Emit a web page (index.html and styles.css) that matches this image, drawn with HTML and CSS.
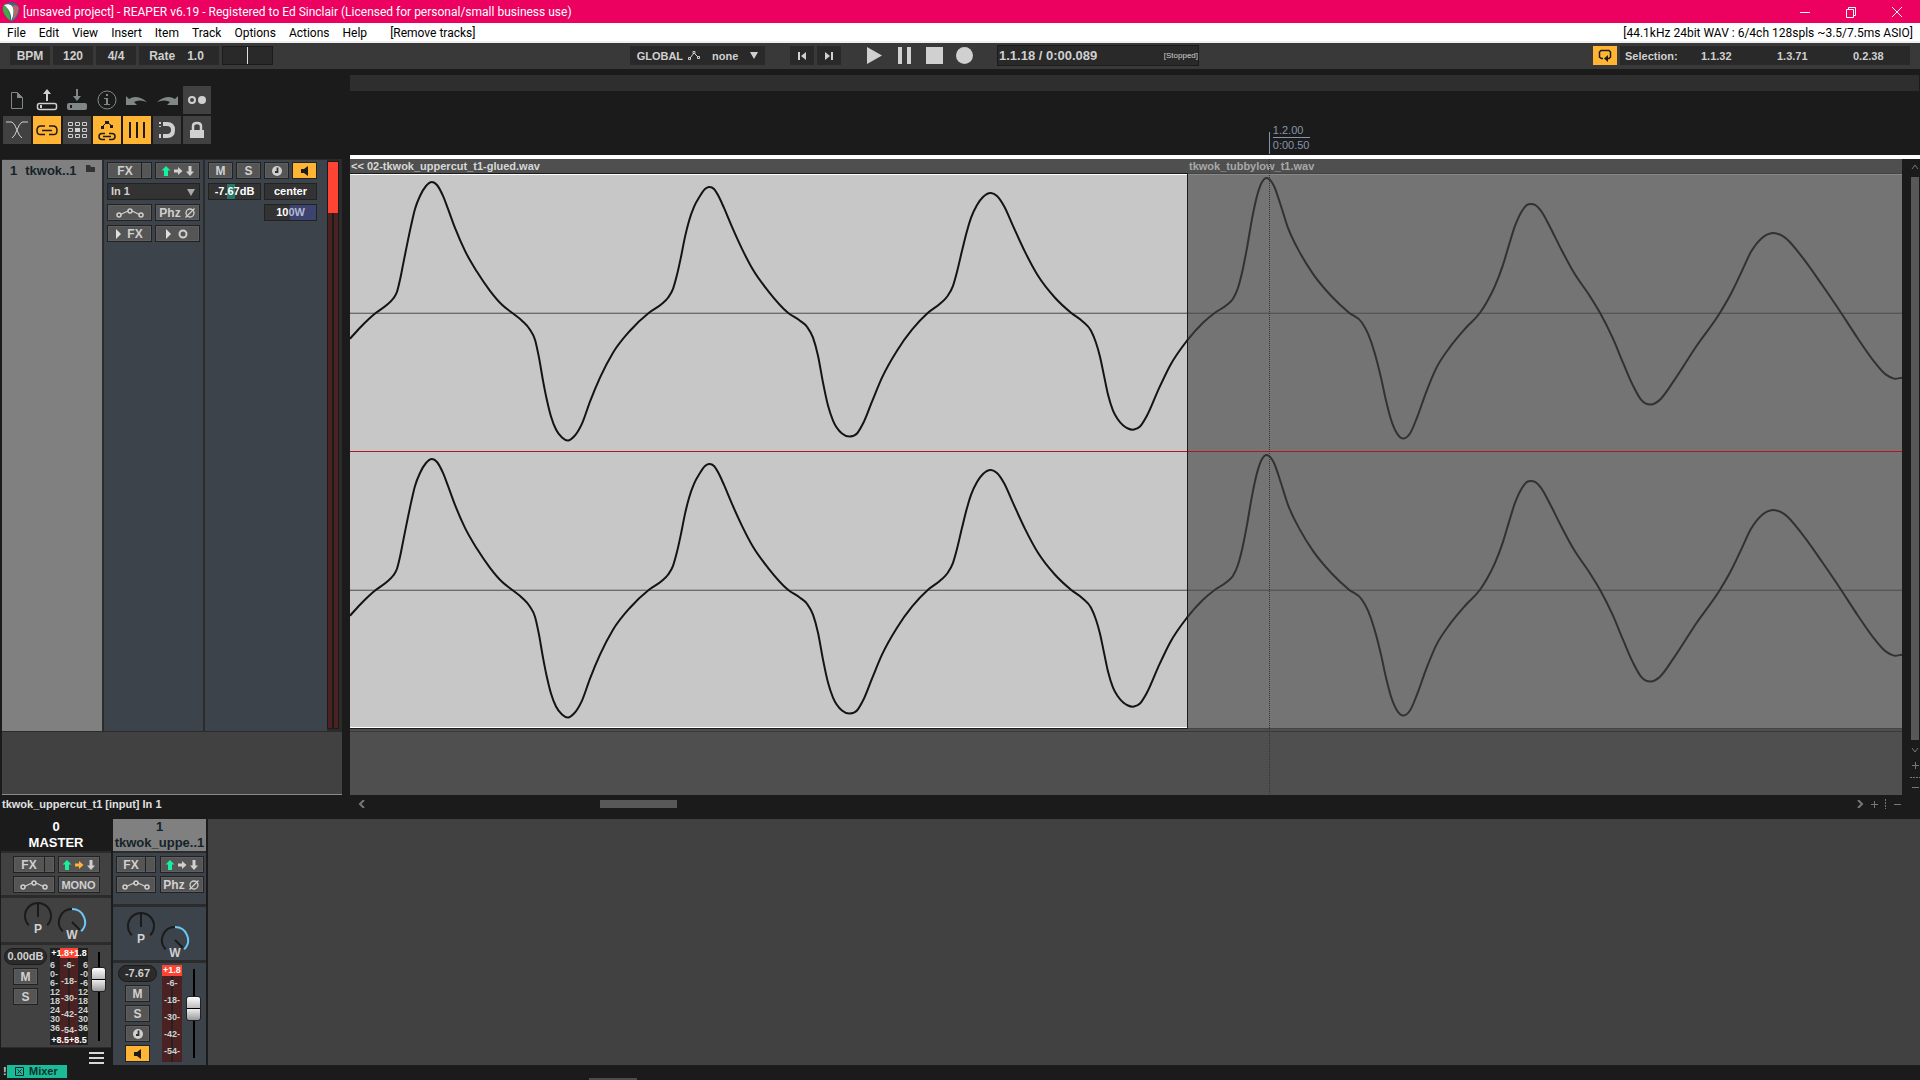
FILE: index.html
```html
<!DOCTYPE html>
<html lang="en">
<head>
    <meta charset="UTF-8">
    <meta name="viewport" content="width=device-width, initial-scale=1.0">
    <title>[unsaved project] - REAPER v6.19</title>
    <link rel="stylesheet" href="styles.css">
</head>
<body>
    <!-- shared shapes -->
    <svg class="defs" width="0" height="0">
        <defs>
            <path id="wave" vector-effect="non-scaling-stroke"/>
            <symbol id="route" viewBox="0 0 34 12">
                <path class="up" d="M5 1 9.500 5.500H7V11H3V5.500H0.500z"/>
                <path class="send" d="M13 4.500h4V2l4.500 4L17 10V7.500h-4z"/>
                <path d="M27.500 1h3v5.500H33L29 11 25 6.500h2.500z"/>
            </symbol>
            <symbol id="env" viewBox="0 0 28 10">
                <path d="M4.500 6.500 12 3M16 3l7.500 3.500" fill="none" stroke="currentColor" stroke-width="1.300"/>
                <g fill="none" stroke="currentColor" stroke-width="1.500"><circle cx="3" cy="7" r="2"/><circle cx="14" cy="3" r="2"/><circle cx="25" cy="7" r="2"/></g>
            </symbol>
            <symbol id="phase" viewBox="0 0 12 12">
                <g fill="none" stroke="currentColor" stroke-width="1.300"><circle cx="6" cy="6" r="4"/><path d="M1.500 10.500 10.500 1.500"/></g>
            </symbol>
            <symbol id="clock" viewBox="0 0 12 12">
                <circle cx="6" cy="6" r="5"/><path d="M6.500 2.500V7H4" fill="none" stroke="#333" stroke-width="1.800"/>
            </symbol>
            <symbol id="speaker" viewBox="0 0 12 12">
                <path d="M2 4h3l4-3v10L5 8H2z" fill="#1b1b1b"/>
            </symbol>
        </defs>
    </svg>

    <header class="titlebar">
        <svg class="logo" width="18" height="20" viewBox="0 0 18 20">
            <path d="M8 0.500C3 1 1 3 0.500 6c0 6 4 11 9.500 13.500C15 16 17.500 12 17 6 16 2 13 0 8 0.500z" fill="#2b6d86"/>
            <path d="M2 3C-0.500 6 1 13 8 18.500 8.500 12 6 6 2 3z" fill="#4aa843"/>
            <path d="M2 3c5-2 9 0 9.500 5 0.300 4-1 8-2.500 11 1-7-2-12-7-16z" fill="#fff"/>
            <path d="M10 3.500c4-1 7 0.500 6.500 4C16 12 14 15 10.500 18c1.500-5 2.500-10-0.500-14.500z" fill="#b56a62"/>
        </svg>
        <h1>[unsaved project] - REAPER v6.19 - Registered to Ed Sinclair (Licensed for personal/small business use)</h1>
        <div class="win-buttons">
            <button aria-label="Minimize"><svg width="12" height="12"><path d="M1 6.500h10"/></svg></button>
            <button aria-label="Restore"><svg width="12" height="12"><path d="M1.500 3.500h7v8h-7zM3.500 3.500v-2h7v8h-2"/></svg></button>
            <button aria-label="Close"><svg width="12" height="12"><path d="M1 1l10 10M11 1 1 11"/></svg></button>
        </div>
    </header>

    <nav class="menubar">
        <button>File</button>
        <button>Edit</button>
        <button>View</button>
        <button>Insert</button>
        <button>Item</button>
        <button>Track</button>
        <button>Options</button>
        <button>Actions</button>
        <button>Help</button>
        <button class="last-action">[Remove tracks]</button>
        <span class="audio-info">[44.1kHz 24bit WAV : 6/4ch 128spls ~3.5/7.5ms ASIO]</span>
    </nav>

    <div class="transport">
        <div class="tempo">
            <button class="box">BPM</button>
            <button class="box">120</button>
            <button class="box">4/4</button>
            <label class="box rate" for="rate"><span>Rate</span><span>1.0</span></label>
            <input type="range" id="rate" class="rate-slider">
        </div>
        <button class="box global">
            GLOBAL
            <svg width="12" height="9"><path d="M2 7 6 2l4 4" fill="none" stroke="#d0d0d0"/><path d="M0.500 6.500h2v2h-2zM5 0.500h2v2H5zM9.500 5.500h2v2h-2z" fill="none" stroke="#d0d0d0"/></svg>
            <span>none</span>
            <svg width="8" height="7"><path d="M0 0h8L4 7z" fill="#d0d0d0"/></svg>
        </button>
        <div class="jump">
            <button class="box" aria-label="Go to start"><svg width="8" height="8"><path d="M0 0h2v8H0zM8 0v8L3 4z"/></svg></button>
            <button class="box" aria-label="Go to end"><svg width="8" height="8"><path d="M6 0h2v8H6zM0 0v8l5-4z"/></svg></button>
        </div>
        <div class="play">
            <button aria-label="Play"><svg width="17" height="17"><path d="M1 0v17l15-8.500z"/></svg></button>
            <button aria-label="Pause"><svg width="17" height="17"><path d="M2 0h4v17H2zM11 0h4v17h-4z"/></svg></button>
            <button aria-label="Stop"><svg width="17" height="17"><path d="M0 0h17v17H0z"/></svg></button>
            <button aria-label="Record"><svg width="17" height="17"><circle cx="8.500" cy="8.500" r="8.500"/></svg></button>
        </div>
        <div class="position"><span>1.1.18 / 0:00.089</span><small>[Stopped]</small></div>
        <button class="repeat" aria-label="Repeat"><svg width="14" height="13"><path d="M5 9.500H3.500L1.500 8V3L3 1.500h8L12.500 3v5L11 9.500h-1" fill="none" stroke="#1b1b1b" stroke-width="1.500"/><path d="M6 9.500 10 6v7z" fill="#1b1b1b"/></svg></button>
        <div class="box selection"><span>Selection:</span><span>1.1.32</span><span>1.3.71</span><span>0.2.38</span></div>
    </div>

    <main>
        <div class="left">
            <div class="toolbar">
                <button class="flat dim" aria-label="New project"><svg viewBox="0 0 28 28"><path d="M8.500 6.500h6l5 5v11h-11z" fill="none" stroke="currentColor"/><path d="M14 6v6h6z"/></svg></button>
                <button class="flat" aria-label="Open project"><svg viewBox="0 0 28 28"><rect x="4.500" y="17.500" width="19" height="6" rx="2" fill="none" stroke="currentColor" stroke-width="1.500"/><path d="M7 19h2v3H7zM13 15h2V8h3l-4-5-4 5h3z"/></svg></button>
                <button class="flat dim" aria-label="Save project"><svg viewBox="0 0 28 28"><path d="M6 17h16q2 0 2 2v3q0 2-2 2H6q-2 0-2-2v-3q0-2 2-2zM7 19v3h2v-3z" fill-rule="evenodd"/><path d="M13 3h2v7h3l-4 5-4-5h3z"/></svg></button>
                <button class="flat dim" aria-label="Project settings"><svg viewBox="0 0 28 28"><circle cx="14" cy="14" r="9" fill="none" stroke="currentColor"/><path d="M13 8h2v2h-2zM11 12h4v6h2v1h-6v-1h2v-5h-2z"/></svg></button>
                <button class="flat dim" aria-label="Undo"><svg viewBox="0 0 28 28"><path d="M3 10l3 3q8-5 18 3-8-3-13 0l3 3H3z"/></svg></button>
                <button class="flat dim" aria-label="Redo"><svg viewBox="0 0 28 28"><path d="M25 10l-3 3q-8-5-18 3 8-3 13 0l-3 3h11z"/></svg></button>
                <button aria-label="Metronome"><svg viewBox="0 0 28 28"><circle cx="9" cy="14" r="3" fill="none" stroke="currentColor" stroke-width="2"/><circle cx="19" cy="14" r="4"/></svg></button>
                <button aria-label="Crossfade"><svg viewBox="0 0 28 28"><path d="M3 6h6q3 2 5 8t5 8M25 6h-6q-3 2-5 8t-5 8" fill="none" stroke="currentColor"/></svg></button>
                <button class="on" aria-label="Grouping"><svg viewBox="0 0 28 28"><path d="M12 10H8q-4 0-4 4.500T8 18.500h4M16 10h4q4 0 4 4.500t-4 4M16 18.500h4M9 14.500h10" fill="none" stroke="currentColor" stroke-width="1.500"/></svg></button>
                <button aria-label="Ripple editing"><svg viewBox="0 0 28 28"><path d="M5.500 6.500h4v3h-4zM12.500 6.500h4v3h-4zM19.500 6.500h4v3h-4zM5.500 12.500h4v3h-4zM19.500 12.500h4v3h-4zM5.500 18.500h4v3h-4zM12.500 18.500h4v3h-4zM19.500 18.500h4v3h-4z" fill="none" stroke="currentColor"/><path d="M12 12h5v4h-5z"/></svg></button>
                <button class="on" aria-label="Move envelopes"><svg viewBox="0 0 28 28"><path d="M9 11l5-5 5 4" fill="none" stroke="currentColor"/><path d="M8 10h3v3H8zM12 5h4v3h-4zM17 9h3v3h-3z"/><path d="M12 17.500H9q-3 0-3 3t3 3h3M16 17.500h3q3 0 3 3t-3 3h-3M10 20.500h8" fill="none" stroke="currentColor" stroke-width="1.500"/></svg></button>
                <button class="on" aria-label="Grid"><svg viewBox="0 0 28 28"><path d="M6 6h2v16H6zM13 6h2v16h-2zM20 6h2v16h-2z"/></svg></button>
                <button aria-label="Snap"><svg viewBox="0 0 28 28"><path d="M10 8h4q6 0 6 6t-6 6h-4" fill="none" stroke="currentColor" stroke-width="4"/><path d="M6 6h2v2H6zM6 10h2v1H6zM6 18h2v4H6z"/></svg></button>
                <button aria-label="Lock"><svg viewBox="0 0 28 28"><path d="M7 14h14v8H7z"/><path d="M10 14v-4q0-3 4-3t4 3v4" fill="none" stroke="currentColor" stroke-width="2.500"/></svg></button>
            </div>

            <section class="track">
                <div class="track-name">
                    <span>1</span><span>tkwok..1</span>
                    <svg width="9" height="7"><path d="M0 0h4l1 2h4v5H0z" fill="#333"/></svg>
                </div>
                <div class="track-io">
                    <button class="btn split">FX</button>
                    <button class="btn" aria-label="Routing"><svg width="34" height="12"><use href="#route"/></svg></button>
                    <label class="input-pick"><select aria-label="Input"><option>In 1</option></select></label>
                    <button class="btn" aria-label="Envelopes"><svg width="28" height="10"><use href="#env"/></svg></button>
                    <button class="btn">Phz <svg width="12" height="12"><use href="#phase"/></svg></button>
                    <button class="btn arrow">FX</button>
                    <button class="btn arrow"><svg width="12" height="12"><circle cx="6" cy="6" r="3.500" fill="none" stroke="currentColor" stroke-width="2"/></svg></button>
                </div>
                <div class="track-mix">
                    <button class="btn">M</button>
                    <button class="btn">S</button>
                    <button class="btn" aria-label="Record arm"><svg width="12" height="12"><use href="#clock"/></svg></button>
                    <button class="btn on" aria-label="Monitor"><svg width="12" height="12"><use href="#speaker"/></svg></button>
                    <button class="value vol">-7.67dB</button>
                    <button class="value">center</button>
                    <button class="value width">10<span>0W</span></button>
                </div>
                <div class="track-meter"></div>
            </section>
            <div class="no-tracks"></div>
        </div>

        <div class="arrange">
            <div class="region-strip"></div>
            <div class="ruler">
                <div class="mark"><span>1.2.00</span><span>0:00.50</span></div>
            </div>
            <div class="lane">
                <div class="item selected">
                    <div class="item-name">&lt;&lt; 02-tkwok_uppercut_t1-glued.wav</div>
                    <div class="channels">
                        <svg viewBox="0 -138 837 276" preserveAspectRatio="none"><path class="zero" d="M0 0.500h837"/><use href="#wave"/></svg>
                        <svg viewBox="0 -138 837 276" preserveAspectRatio="none"><path class="zero" d="M0 0.500h837"/><use href="#wave"/></svg>
                    </div>
                </div>
                <div class="item">
                    <div class="item-name">tkwok_tubbylow_t1.wav</div>
                    <div class="channels">
                        <svg viewBox="838 -138 714 276" preserveAspectRatio="none"><path class="zero" d="M838 0.500h714"/><use href="#wave"/></svg>
                        <svg viewBox="838 -138 714 276" preserveAspectRatio="none"><path class="zero" d="M838 0.500h714"/><use href="#wave"/></svg>
                    </div>
                </div>
            </div>
            <div class="lane-rest"></div>
            <div class="gridline"></div>
            <div class="vscroll">
                <svg width="8" height="7"><path d="M1 6l3-4 3 4"/></svg>
                <div class="thumb"></div>
                <svg width="8" height="7"><path d="M1 1l3 4 3-4"/></svg>
                <svg width="8" height="8"><path d="M4.500 1v7M1 4.500h7"/></svg>
                <svg width="10" height="3"><path d="M0 1.500h10" stroke-dasharray="2 1"/></svg>
                <svg width="8" height="3"><path d="M1 1.500h7"/></svg>
            </div>
        </div>
    </main>

    <div class="statusbar">
        <span>tkwok_uppercut_t1 [input] In 1</span>
        <div class="hscroll">
            <svg width="8" height="8"><path d="M6 0 2 4l4 4" stroke-width="2"/></svg>
            <div class="thumb"></div>
            <svg width="8" height="8"><path d="M2 0l4 4-4 4" stroke-width="2"/></svg>
            <svg width="8" height="8"><path d="M4.500 1v7M1 4.500h7"/></svg>
            <svg width="3" height="10"><path d="M1.500 0v10" stroke-dasharray="2 1"/></svg>
            <svg width="8" height="8"><path d="M1 4.500h7"/></svg>
        </div>
    </div>

    <section class="mixer">
        <div class="strip master">
            <h2><span>0</span><span>MASTER</span></h2>
            <div class="strip-buttons">
                <button class="btn split">FX</button>
                <button class="btn" aria-label="Routing"><svg width="34" height="12"><use href="#route"/></svg></button>
                <button class="btn" aria-label="Envelopes"><svg width="28" height="10"><use href="#env"/></svg></button>
                <button class="btn mono">MONO</button>
            </div>
            <div class="knobs">
                <svg width="30" height="36"><path d="M5.800 24.200A13 13 0 1 1 24.200 24.200M15 3v13"/><text x="15" y="32">P</text></svg>
                <svg width="30" height="36"><path d="M5.800 24.200A13 13 0 0 1 15 2M15 15l8 8"/><path class="amount" d="M15 2A13 13 0 0 1 24.200 24.200"/><text x="15" y="32">W</text></svg>
            </div>
            <div class="levels">
                <div class="level-buttons">
                    <output>0.00dB</output>
                    <button class="btn">M</button>
                    <button class="btn">S</button>
                </div>
                <div class="meter wide">
                    <b>+1.8+1.8</b>
                    <div class="scale side"><span>6</span><span>0-</span><span>6-</span><span>12</span><span>18</span><span>24</span><span>30</span><span>36</span></div>
                    <div class="scale"><span>-6-</span><span>-18-</span><span>-30-</span><span>-42-</span><span>-54-</span></div>
                    <div class="scale side end"><span>6</span><span>-0</span><span>-6</span><span>12</span><span>18</span><span>24</span><span>30</span><span>36</span></div>
                    <b>+8.5+8.5</b>
                </div>
                <input type="range" class="fader" aria-label="Master volume" value="76">
            </div>
            <button class="menu" aria-label="Mixer menu"></button>
        </div>
        <div class="strip channel">
            <h2><span>1</span><span>tkwok_uppe..1</span></h2>
            <div class="strip-buttons">
                <button class="btn split">FX</button>
                <button class="btn" aria-label="Routing"><svg width="34" height="12"><use href="#route"/></svg></button>
                <button class="btn" aria-label="Envelopes"><svg width="28" height="10"><use href="#env"/></svg></button>
                <button class="btn">Phz <svg width="12" height="12"><use href="#phase"/></svg></button>
            </div>
            <div class="knobs">
                <svg width="30" height="36"><path d="M5.800 24.200A13 13 0 1 1 24.200 24.200M15 3v13"/><text x="15" y="32">P</text></svg>
                <svg width="30" height="36"><path d="M5.800 24.200A13 13 0 0 1 15 2M15 15l8 8"/><path class="amount" d="M15 2A13 13 0 0 1 24.200 24.200"/><text x="15" y="32">W</text></svg>
            </div>
            <div class="levels">
                <div class="level-buttons">
                    <output>-7.67</output>
                    <button class="btn">M</button>
                    <button class="btn">S</button>
                    <button class="btn" aria-label="Record arm"><svg width="12" height="12"><use href="#clock"/></svg></button>
                    <button class="btn on" aria-label="Monitor"><svg width="12" height="12"><use href="#speaker"/></svg></button>
                </div>
                <div class="meter">
                    <b>+1.8</b>
                    <div class="scale"><span>-6-</span><span>-18-</span><span>-30-</span><span>-42-</span><span>-54-</span></div>
                </div>
                <input type="range" class="fader" aria-label="Track volume" value="58">
            </div>
        </div>
    </section>

    <footer class="docker">
        <span>!</span>
        <button><svg width="9" height="9"><path d="M0.500 0.500h8v8h-8zM2.500 2.500l4 4M6.500 2.500l-4 4" fill="none" stroke="#123"/></svg>Mixer</button>
        <div class="dock-thumb"></div>
    </footer>

    <script>
        // sample peaks as x,y pairs, y counted down from the zero line
        const samples = [
            [0,26],[10,15],[18,7],[26,0],[37,-8],[43,-14],[47,-21],[50,-33],[53,-48],[57,-68],[61,-87],[65,-104],[70,-117],[76,-127],[82,-131],[87,-128],
            [93,-117],[98,-104],[105,-85],[115,-62],[127,-41],[140,-22],[152,-8],[162,0],[172,8],[180,17],[185,27],[189,45],[193,68],[197,88],[201,104],
            [206,117],[212,125],[218,128],[224,124],[232,111],[240,89],[250,65],[263,40],[280,18],[299,0],[312,-9],[318,-15],[323,-24],[327,-38],[331,-56],
            [335,-76],[339,-92],[344,-106],[350,-117],[355,-124],[359,-126],[364,-124],[369,-116],[374,-105],[382,-86],[392,-64],[403,-43],[418,-22],[438,0],
            [450,8],[457,14],[463,25],[468,43],[473,70],[478,93],[483,108],[492,121],[500,124],[507,121],[513,111],[522,89],[532,65],[547,38],[562,17],[578,0],
            [590,-9],[597,-16],[603,-27],[607,-41],[612,-62],[617,-82],[621,-95],[627,-108],[633,-116],[641,-120],[647,-117],[654,-107],[663,-87],[675,-61],
            [688,-37],[705,-15],[721,0],[733,9],[741,18],[746,30],[750,44],[754,63],[758,82],[763,98],[768,107],[778,116],[784,117],[790,114],[797,103],
            [808,78],[820,53],[837,28],[853,10],[865,0],[877,-8],[883,-14],[888,-25],[892,-40],[897,-65],[902,-94],[907,-117],[912,-131],[916,-135],[919,-134],
            [924,-127],[930,-110],[938,-85],[950,-60],[963,-39],[982,-16],[999,0],[1012,10],[1018,21],[1024,38],[1031,65],[1036,88],[1041,107],[1047,121],
            [1053,126],[1060,121],[1067,105],[1076,80],[1086,56],[1101,33],[1116,15],[1130,0],[1137,-11],[1145,-27],[1153,-48],[1159,-68],[1165,-87],
            [1172,-102],[1177,-108],[1181,-109],[1185,-108],[1191,-102],[1200,-86],[1211,-64],[1224,-40],[1239,-18],[1250,0],[1263,26],[1273,50],[1283,73],
            [1291,87],[1301,92],[1309,88],[1324,68],[1346,34],[1370,0],[1382,-21],[1392,-42],[1401,-61],[1412,-75],[1423,-80],[1434,-76],[1452,-56],
            [1472,-28],[1491,0],[1508,26],[1525,50],[1536,62],[1544,66],[1552,65]
        ];

        // slope of the parabola through a sample and its two neighbours
        function slope(i) {
            const p = samples[i - 1], q = samples[i], r = samples[i + 1];
            if (!p) return (r[1] - q[1]) / (r[0] - q[0]);
            if (!r) return (q[1] - p[1]) / (q[0] - p[0]);
            const h1 = q[0] - p[0], h2 = r[0] - q[0];
            return ((q[1] - p[1]) / h1 * h2 + (r[1] - q[1]) / h2 * h1) / (h1 + h2);
        }

        let d = "M" + samples[0];
        for (let i = 0; i < samples.length - 1; i++) {
            const [x1, y1] = samples[i];
            const [x2, y2] = samples[i + 1];
            const h = (x2 - x1) / 3;
            d += `C${x1 + h},${y1 + slope(i) * h} ${x2 - h},${y2 - slope(i + 1) * h} ${x2},${y2}`;
        }
        document.querySelector("#wave").setAttribute("d", d);
    </script>
</body>
</html>
```
FILE: styles.css
```css
*{
    margin:0;
    padding:0;
    box-sizing:border-box;
}
body{
    height:100vh;
    display:flex;
    flex-direction:column;
    overflow:hidden;
    background:#1b1b1b;
    color:#d0d0d0;
    font-family:"Liberation Sans", Arial, sans-serif;
    font-size:11px;
    font-weight:bold;
}
button,select,input,output{
    font:inherit;
    color:inherit;
    border:0;
    background:none;
}
svg{
    display:block;
    flex:none;
    fill:currentColor;
}
.defs{
    position:absolute;
}

/* window */
.titlebar{
    height:23px;
    display:flex;
    align-items:center;
    padding-left:2px;
    background:#ec0060;
    color:#fff;
    font-family:Roboto, sans-serif;
}
.titlebar h1{
    margin-left:3px;
    font-size:12px;
    font-weight:400;
}
.win-buttons{
    margin-left:auto;
    display:flex;
}
.win-buttons button{
    width:46px;
    height:22px;
    display:flex;
    align-items:center;
    justify-content:center;
}
.win-buttons svg{
    fill:none;
    stroke:#fff;
}
.menubar{
    height:20px;
    display:flex;
    align-items:center;
    padding:2px 7px 0;
    gap:13px;
    background:#fff;
    border-bottom:2px solid #f0f0f0;
    color:#000;
    font-family:Roboto, sans-serif;
    font-size:12px;
    font-weight:400;
}
.last-action{
    margin-left:10px;
}
.audio-info{
    margin-left:auto;
}

/* transport */
.transport{
    height:26px;
    display:flex;
    align-items:center;
    padding:0 10px 1px;
    background:#393939;
    font-size:12px;
}
.box{
    height:19px;
    display:flex;
    align-items:center;
    justify-content:center;
    background:#292929;
}
.tempo{
    flex:0 1 620px;
    display:flex;
    gap:3px;
}
.tempo button{
    width:40px;
}
.rate{
    width:80px;
    gap:12px;
    padding-right:5px;
}
.rate-slider{
    width:51px;
    height:19px;
    appearance:none;
    background:#292929;
    border:1px solid #1b1b1b;
}
.rate-slider::-webkit-slider-thumb{
    appearance:none;
    width:1px;
    height:17px;
    background:#e0e0e0;
}
.global{
    width:135px;
    gap:5px;
    font-size:11px;
}
.global span{
    margin:0 7px;
}
.jump{
    display:flex;
    gap:3px;
    margin-left:25px;
}
.jump button{
    width:24px;
}
.play{
    display:flex;
    gap:13px;
    margin-left:25px;
}
.position{
    width:202px;
    height:21px;
    display:flex;
    align-items:center;
    justify-content:space-between;
    margin-left:24px;
    padding-left:1px;
    overflow:hidden;
    background:#292929;
    border:1px solid #1b1b1b;
    font-size:13px;
}
.position small{
    font-size:8px;
    font-weight:400;
}
.repeat{
    width:24px;
    height:19px;
    display:flex;
    align-items:center;
    justify-content:center;
    margin-left:auto;
    margin-right:3px;
    background:#ffb433;
}
.selection{
    width:290px;
    justify-content:flex-start;
    padding-left:5px;
    overflow:hidden;
    font-size:11px;
}
.selection span{
    width:76px;
    flex:none;
}

/* main area */
main{
    flex:1;
    min-height:0;
    display:flex;
}
.left{
    width:350px;
    flex:none;
    display:flex;
    flex-direction:column;
    padding:17px 8px 0 2px;
}
.toolbar{
    height:73px;
    display:grid;
    grid-template-columns:repeat(7, 28px);
    grid-auto-rows:28px;
    gap:2px;
    padding-left:1px;
}
.toolbar button{
    background:#414141;
    color:#d0d0d0;
}
.toolbar .flat{
    background:none;
}
.toolbar .dim{
    color:#7f8887;
}
.toolbar .on{
    background:#ffb433;
    color:#1b1b1b;
}
.track{
    flex:1;
    display:flex;
    gap:2px;
    background:#2b2b2b;
    border-top:1px solid #2b2b2b;
}
.track-name{
    width:100px;
    display:flex;
    padding:3px 7px 0 8px;
    background:#808080;
    color:#142329;
    font-size:13px;
}
.track-name span{
    margin-right:8px;
}
.track-name svg{
    margin:2px 0 0 auto;
}
.track-io,.track-mix{
    display:grid;
    align-content:start;
    gap:4px 3px;
    padding:2px 3px;
    background:#3c434a;
}
.track-io{
    width:99px;
    grid-template-columns:1fr 1fr;
    grid-auto-rows:17px;
}
.track-mix{
    flex:1;
    grid-template-columns:repeat(4, 25px);
    grid-auto-rows:17px;
}
.btn{
    display:flex;
    align-items:center;
    justify-content:center;
    gap:3px;
    position:relative;
    background:#555;
    border:1px solid #222;
    box-shadow:inset 0 0 0 1px #5e5e5e;
    color:#d0d0d0;
    font-size:12px;
    line-height:14px;
}
.btn.mono{
    font-size:11px;
}
.up{
    fill:#17f09c;
}
.send{
    fill:var(--send, currentColor);
}
.btn.on{
    background:#ffb433;
    box-shadow:none;
}
.split{
    padding-right:9px;
}
.split::after{
    content:"";
    position:absolute;
    right:9px;
    top:0;
    bottom:0;
    border-left:1px solid #222;
}
.arrow{
    gap:6px;
}
.arrow::before{
    content:"";
    border:5px solid transparent;
    border-left:5px solid #e0e0e0;
    border-right:0;
}
.input-pick{
    grid-column:span 2;
    position:relative;
    background:#333;
    border:1px solid #222;
}
.input-pick select{
    width:100%;
    height:14px;
    appearance:none;
    padding-left:3px;
}
.input-pick::after{
    content:"";
    position:absolute;
    right:4px;
    top:5px;
    border:4px solid transparent;
    border-top:7px solid #aaa;
    border-bottom:0;
}
.value{
    grid-column:span 2;
    padding-bottom:1px;
    background:#333;
    border:1px solid #222;
    color:#fff;
}
.vol{
    background:linear-gradient(90deg, transparent 18px, #287868 18px, #287868 26px, transparent 26px) #333;
}
.width{
    grid-column:3 / span 2;
    background:linear-gradient(90deg, #333 50%, #3c436e 50%);
}
.width span{
    color:#b4b8d8;
}
.track-meter{
    width:12px;
    margin:1px 3px 2px -2px;
    border:1px solid #1b1b1b;
    background:
        linear-gradient(#ff4433, #ff4433) 0 0 / 100% 51px no-repeat,
        linear-gradient(90deg, #4b2122 4px, #1b1b1b 4px, #1b1b1b 6px, #4b2122 6px);
}
.no-tracks{
    height:64px;
    background:#414141;
    border-top:1px solid #2b2b2b;
    border-bottom:1px solid #8a8a8a;
}

/* arrange view */
.arrange{
    flex:1;
    display:flex;
    flex-direction:column;
    position:relative;
    padding-top:6px;
}
.region-strip{
    height:16px;
    margin-right:1px;
    background:#2e2e2e;
}
.ruler{
    height:68px;
    border-bottom:4px solid #fff;
    color:#8596ab;
    font-weight:400;
}
.mark{
    width:41px;
    margin:31px 0 0 calc((100% - 18px) * 0.592);
    padding-left:4px;
    background:linear-gradient(#8596ab, #8596ab) 0 100% / 1px 22px no-repeat;
}
.mark span{
    display:block;
    height:16px;
    line-height:14px;
}
.mark span:first-child{
    line-height:17px;
    border-bottom:1px solid #8596ab;
}
.lane{
    flex:1;
    min-height:0;
    display:flex;
    margin-right:18px;
    padding-bottom:2px;
    background:#4f4f4f;
    border-bottom:1px solid #343b42;
}
.item{
    flex:714;
    min-width:0;
    display:flex;
    flex-direction:column;
    color:#a8a8a8;
}
.item.selected{
    flex:838;
    color:#d8d8d8;
}
.item-name{
    height:14px;
    padding-left:1px;
    line-height:14px;
    white-space:nowrap;
}
.channels{
    flex:1;
    min-height:0;
    display:flex;
    flex-direction:column;
    padding:1px 0;
    background:#747474;
    border-top:1px solid #444;
    border-bottom:1px solid #444;
    box-shadow:inset 0 1px #888;
}
.selected .channels{
    background:#c7c7c7;
    border-color:#1b1b1b;
    border-right:1px solid #1b1b1b;
    box-shadow:inset 0 1px #fff, inset 0 -1px #fff;
}
.channels svg{
    flex:1;
    width:100%;
    min-height:0;
    fill:none;
    stroke:#323232;
    stroke-width:2;
}
.selected svg{
    stroke:#141414;
}
.channels svg + svg{
    border-top:1px solid #b31818;
}
.channels .zero{
    stroke:#4c4c4c;
    stroke-width:1;
    vector-effect:non-scaling-stroke;
}
.lane-rest{
    height:63px;
    margin-right:18px;
    background:#4f4f4f;
}
.gridline{
    position:absolute;
    top:90px;
    bottom:1px;
    left:calc((100% - 18px) * 0.592);
    width:1px;
    background:repeating-linear-gradient(#333 0 1px, transparent 1px 2px);
}
.vscroll{
    position:absolute;
    top:90px;
    right:0;
    bottom:0;
    width:18px;
    display:flex;
    flex-direction:column;
    align-items:center;
    gap:7px;
    padding:4px 0 6px 8px;
}
.vscroll svg,.hscroll svg{
    fill:none;
    stroke:#777;
}
.thumb{
    background:#585858;
}
.vscroll .thumb{
    flex:1;
    width:8px;
}
.statusbar{
    height:24px;
    display:flex;
    padding-left:2px;
}
.statusbar > span{
    width:356px;
    padding-top:3px;
    color:#e0e0e0;
}
.hscroll{
    flex:1;
    height:18px;
    display:flex;
    align-items:center;
    gap:6px;
    padding-right:19px;
}
.hscroll .thumb{
    width:77px;
    height:8px;
    margin:0 auto 0 calc(15% - 3px);
}

/* mixer */
.mixer{
    height:246px;
    display:flex;
    gap:2px;
    padding-left:1px;
    background:#1b1b1b;
}
.mixer::after{
    content:"";
    flex:1;
    background:#414141;
}
.strip{
    display:flex;
    flex-direction:column;
    gap:3px;
    background:#2b2b2b;
}
.strip h2{
    height:32px;
    margin-bottom:-1px;
    background:#1b1b1b;
    color:#fff;
    font-size:13px;
    line-height:16px;
    text-align:center;
    white-space:nowrap;
}
.strip h2 span{
    display:block;
}
.master{
    width:110px;
    background:linear-gradient(#2b2b2b 229px, #1b1b1b 229px);
    --send:#ffb433;
}
.channel{
    width:93px;
}
.channel h2{
    background:#808080;
    color:#142329;
}
.strip-buttons,.knobs,.levels{
    background:#414141;
}
.channel .strip-buttons,.channel .knobs,.channel .levels{
    background:#3c434a;
}
.strip-buttons{
    height:42px;
    display:grid;
    grid-template-columns:42px 42px;
    grid-auto-rows:17px;
    justify-content:center;
    gap:3px;
    padding-top:3px;
}
.channel .strip-buttons{
    height:51px;
    grid-template-columns:40px 44px;
    gap:3px 4px;
}
.knobs{
    height:44px;
    display:flex;
    justify-content:center;
    align-items:flex-start;
    gap:4px;
    padding:3px 3px 0 0;
}
.knobs svg{
    fill:none;
    stroke:#1b1b1b;
    stroke-width:2;
}
.knobs svg + svg{
    margin-top:6px;
}
.channel .knobs{
    height:53px;
    padding-top:4px;
}
.channel .knobs svg + svg{
    margin-top:14px;
}
.knobs .amount{
    stroke:#6cc9f7;
}
.knobs text{
    fill:#d0d0d0;
    stroke:none;
    text-anchor:middle;
    font-size:12px;
}
.levels{
    flex:1;
    display:flex;
    align-items:flex-start;
    padding:3px 3px 0;
}
.level-buttons{
    width:43px;
    display:grid;
    grid-template-columns:25px;
    grid-auto-rows:17px;
    justify-content:center;
    gap:3px;
}
.level-buttons output{
    width:43px;
    margin-left:-9px;
    background:#2b2b2b;
    border:1px solid #1b1b1b;
    border-radius:9px;
    line-height:15px;
    text-align:center;
}
.meter{
    width:20px;
    height:97px;
    display:flex;
    flex-wrap:wrap;
    justify-content:center;
    margin-left:5px;
    background:linear-gradient(90deg, #4b2122 9px, #222 9px, #222 11px, #4b2122 11px);
    font-size:9px;
    line-height:9px;
}
.meter b{
    width:100%;
    background:#ff4433;
    color:#fff;
    text-align:center;
    line-height:10px;
}
.meter .scale{
    height:86px;
    display:flex;
    flex-direction:column;
    align-items:center;
    justify-content:space-between;
    padding:3px 0 6px;
}
.meter.wide{
    width:38px;
    margin-left:3px;
    background:linear-gradient(90deg, #1f1f1f 10px, #4b2122 10px, #4b2122 18px, #222 18px, #222 20px, #4b2122 20px, #4b2122 28px, #1f1f1f 28px);
}
.wide b{
    background:linear-gradient(90deg, transparent 10px, #ff4433 10px, #ff4433 28px, transparent 28px);
}
.wide b:last-child{
    background:none;
}
.wide .scale{
    width:18px;
    height:77px;
    padding:3px 0 0;
}
.wide .side{
    width:10px;
    align-items:flex-start;
    padding-bottom:3px;
}
.wide .end{
    align-items:flex-end;
}
.fader{
    width:15px;
    height:89px;
    margin:4px 0 0 3px;
    appearance:none;
    writing-mode:vertical-lr;
    direction:rtl;
    background:linear-gradient(#000, #000) 50% 0 / 2px 100% no-repeat;
}
.fader::-webkit-slider-thumb{
    appearance:none;
    width:15px;
    height:25px;
    border:1px solid #222;
    border-radius:3px;
    background:linear-gradient(#fff, #bbb 11px, #000 11px, #000 12px, #eee 12px, #999);
}
.channel .level-buttons{
    width:39px;
}
.channel .level-buttons output{
    width:39px;
    margin-left:-7px;
}
.channel .levels{
    padding:2px 3px 0 5px;
}
.channel .fader{
    margin-left:4px;
}
.menu{
    width:15px;
    height:12px;
    margin:2px 7px 1px auto;
    border-top:2px solid #d8d8d8;
    border-bottom:2px solid #d8d8d8;
    background:linear-gradient(#d8d8d8, #d8d8d8) 0 50% / 100% 2px no-repeat;
}

/* docker tabs */
.docker{
    height:15px;
    display:flex;
    align-items:flex-start;
    padding-left:3px;
}
.docker span{
    width:4px;
}
.docker button{
    width:60px;
    height:13px;
    display:flex;
    align-items:center;
    gap:5px;
    padding-left:8px;
    background:#1abc98;
    color:#12302a;
    line-height:13px;
}
.dock-thumb{
    width:48px;
    height:2px;
    align-self:flex-end;
    margin-left:calc(27% + 4px);
    background:#4c4c4c;
}
```
